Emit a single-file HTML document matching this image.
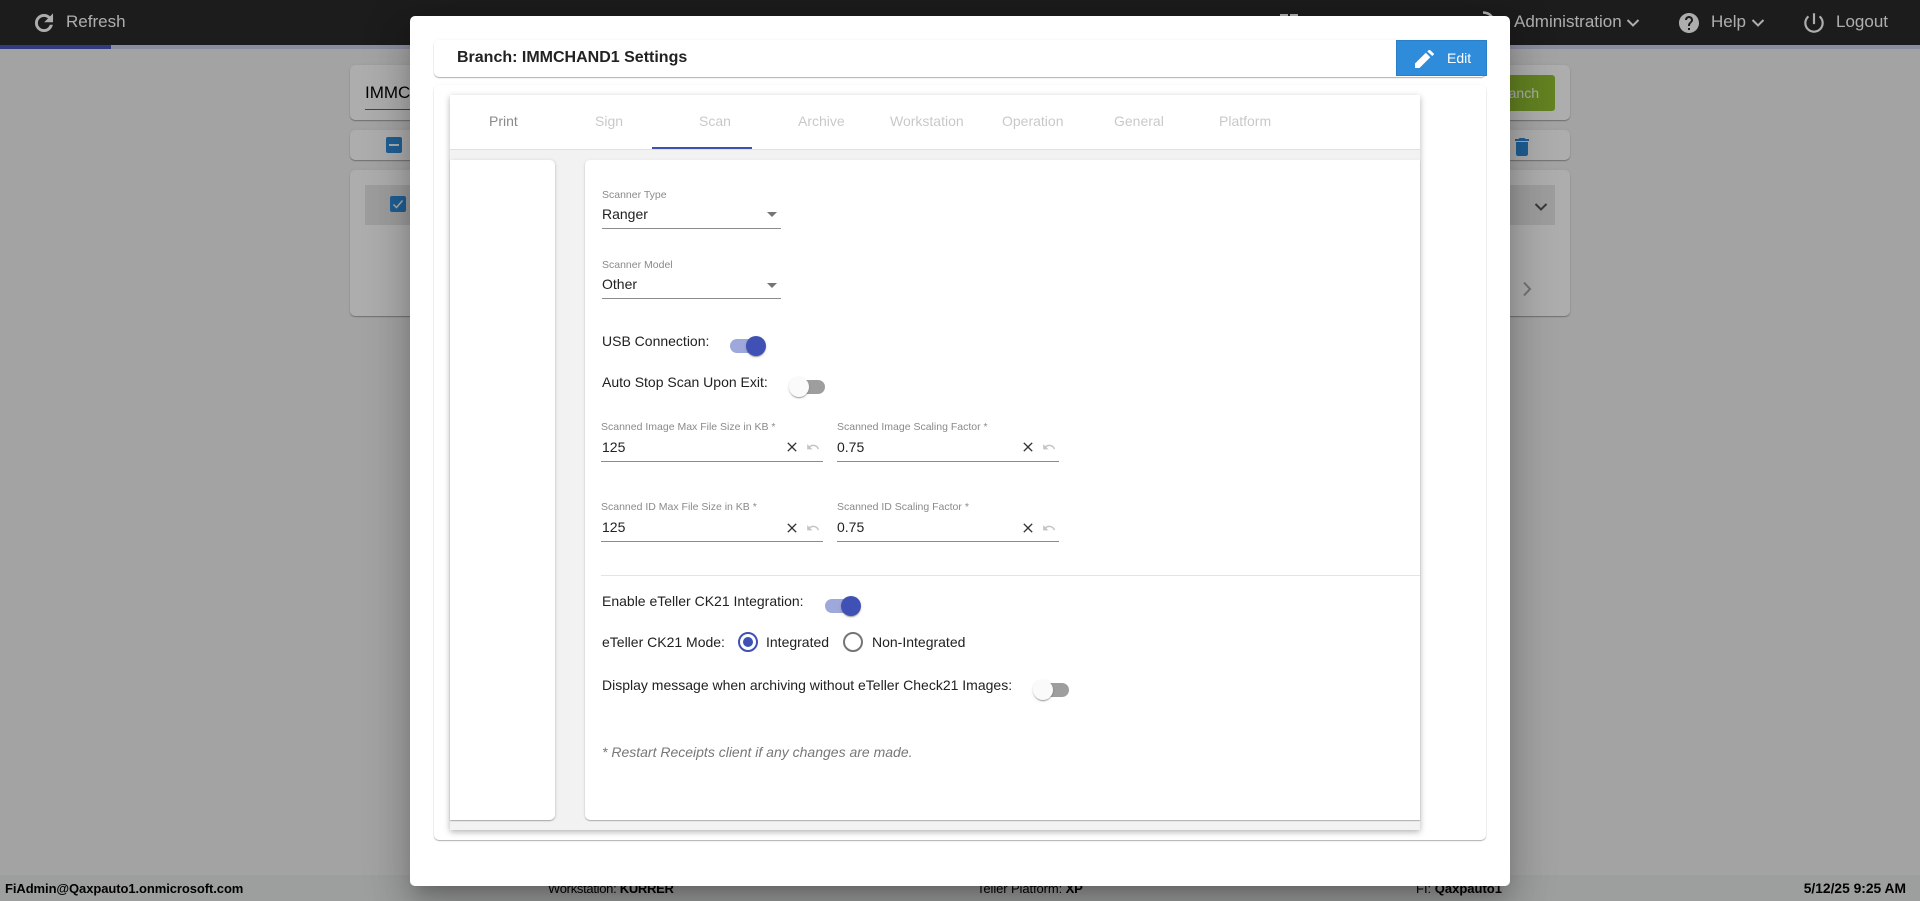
<!DOCTYPE html>
<html lang="en"><head><meta charset="utf-8"><title>Branch Settings</title>
<style>
*{box-sizing:border-box}
html,body{margin:0;padding:0;width:1920px;height:901px;overflow:hidden;background:#f0f0f0;font-family:"Liberation Sans",Arial,sans-serif;color:#212121}
.a{position:absolute}
.t{position:absolute;white-space:nowrap;line-height:20px;height:20px;font-size:14px}
.card{position:absolute;background:#fff;border-radius:5px;box-shadow:0 1px 1px rgba(0,0,0,.3),0 0 3px rgba(0,0,0,.05)}
svg{position:absolute;display:block}
.nav{color:#fff;font-size:17px}
.tab{color:rgba(0,0,0,.22)}
.lbl{font-size:10.5px;color:#8a8a8a}
.line{position:absolute;height:1px;background:#8c8c8c}
.arrow{position:absolute;width:0;height:0;border-left:5px solid transparent;border-right:5px solid transparent;border-top:5px solid #757575}
.trk{position:absolute;width:34px;height:14px;border-radius:7px}
.thm{position:absolute;width:20px;height:20px;border-radius:50%;box-shadow:0 2px 1px -1px rgba(0,0,0,.2),0 1px 1px 0 rgba(0,0,0,.14),0 1px 3px 0 rgba(0,0,0,.12)}
.foot{font-size:13px;color:#000}
</style></head><body>
<!-- background page -->
<div class="a" style="left:0;top:0;width:1920px;height:45px;background:#2a2a2a"></div>
<div class="a" style="left:0;top:45px;width:1920px;height:4px;background:#ccd0ee"></div>
<div class="a" style="left:0;top:45px;width:111px;height:4px;background:#4a58c0"></div>
<svg style="left:31px;top:10px" width="26" height="26" viewBox="0 0 24 24" fill="#fff" stroke="#fff" stroke-width=".7"><path d="M17.65 6.35C16.2 4.9 14.21 4 12 4c-4.42 0-7.99 3.58-7.99 8s3.57 8 7.99 8c3.73 0 6.84-2.55 7.73-6h-2.08c-.82 2.33-3.04 4-5.65 4-3.31 0-6-2.69-6-6s2.69-6 6-6c1.66 0 3.14.69 4.22 1.78L13 11h7V4l-2.35 2.35z"/></svg>
<div class="t nav" style="left:66px;top:12px">Refresh</div>
<div class="a" style="left:1280px;top:14px;width:8px;height:2px;background:#fff"></div>
<div class="a" style="left:1290px;top:14px;width:8px;height:2px;background:#fff"></div>
<svg style="left:1481px;top:11px" width="14" height="6" viewBox="0 0 14 6" fill="none" stroke="#fff" stroke-width="2.500"><path d="M2 1.500c4 0 7 1.500 9 4.500"/></svg>
<div class="t nav" style="left:1514px;top:12px">Administration</div>
<svg style="left:1626px;top:18px" width="14" height="10" viewBox="0 0 14 10" fill="none" stroke="#fff" stroke-width="2"><path d="M1.500 2l5.500 5.500L12.500 2"/></svg>
<svg style="left:1677px;top:11px" width="24" height="24" viewBox="0 0 24 24" fill="#fff"><path d="M12 2C6.48 2 2 6.48 2 12s4.48 10 10 10 10-4.48 10-10S17.52 2 12 2zm1 17h-2v-2h2v2zm2.07-7.75l-.9.92C13.45 12.9 13 13.5 13 15h-2v-.5c0-1.1.45-2.1 1.17-2.83l1.24-1.26c.37-.36.59-.86.59-1.41 0-1.1-.9-2-2-2s-2 .9-2 2H8c0-2.21 1.79-4 4-4s4 1.79 4 4c0 .88-.36 1.68-.93 2.25z"/></svg>
<div class="t nav" style="left:1711px;top:12px">Help</div>
<svg style="left:1751px;top:18px" width="14" height="10" viewBox="0 0 14 10" fill="none" stroke="#fff" stroke-width="2"><path d="M1.500 2l5.500 5.500L12.500 2"/></svg>
<svg style="left:1801px;top:10px" width="26" height="26" viewBox="0 0 24 24" fill="#fff"><path d="M13 3h-2v10h2V3zm4.830 2.170l-1.420 1.420C17.990 7.860 19 9.810 19 12c0 3.870-3.130 7-7 7s-7-3.130-7-7c0-2.190 1.010-4.140 2.580-5.420L6.170 5.170C4.230 6.820 3 9.260 3 12c0 4.970 4.030 9 9 9s9-4.030 9-9c0-2.740-1.230-5.180-3.170-6.830z"/></svg>
<div class="t nav" style="left:1836px;top:12px">Logout</div>

<div class="card" style="left:350px;top:65px;width:1220px;height:55px"></div>
<div class="t" style="left:365px;top:83px;font-size:17px;color:#000">IMMCHAND1</div>
<div class="line" style="left:365px;top:109px;width:100px;background:#666"></div>
<div class="a" style="left:1480px;top:75px;width:75px;height:36px;background:#93c032;border-radius:3px"></div>
<div class="t" style="left:1450px;top:83px;font-size:14px;color:#fff;width:89px;text-align:right">Branch</div>
<div class="card" style="left:350px;top:130px;width:1220px;height:30px"></div>
<div class="a" style="left:386px;top:137px;width:16px;height:16px;background:#2e8cdb;border-radius:2px"></div>
<div class="a" style="left:389px;top:144px;width:10px;height:2px;background:#fff"></div>
<svg style="left:1510px;top:135px" width="24" height="24" viewBox="0 0 24 24" fill="#2e8cdb"><path d="M6 19c0 1.100.9 2 2 2h8c1.100 0 2-.9 2-2V7H6v12zM19 4h-3.500l-1-1h-5l-1 1H5v2h14V4z"/></svg>
<div class="card" style="left:350px;top:170px;width:1220px;height:146px"></div>
<div class="a" style="left:365px;top:185px;width:1190px;height:40px;background:#e8e8e8"></div>
<div class="a" style="left:390px;top:196px;width:16px;height:16px;background:#2e8cdb;border-radius:2px"></div>
<svg style="left:390px;top:196px" width="16" height="16" viewBox="0 0 16 16" fill="none" stroke="#fff" stroke-width="1.500"><path d="M3.500 8.500l3 3 6-7"/></svg>
<svg style="left:1534px;top:202px" width="14" height="10" viewBox="0 0 14 10" fill="none" stroke="#555" stroke-width="2"><path d="M1.500 2l5.500 5.500L12.500 2"/></svg>
<svg style="left:1522px;top:281px" width="10" height="16" viewBox="0 0 10 16" fill="none" stroke="#aaa" stroke-width="2"><path d="M2 1.500l6 6.500-6 6.500"/></svg>

<div class="a" style="left:0;top:875px;width:1920px;height:26px;background:#e8eaeb"></div>
<div class="t foot" style="left:5px;top:879px;font-weight:bold;letter-spacing:-.08px">FiAdmin@Qaxpauto1.onmicrosoft.com</div>
<div class="t foot" style="left:548px;top:879px;letter-spacing:-.3px">Workstation: <b>KURRER</b></div>
<div class="t foot" style="left:977px;top:879px;letter-spacing:-.1px">Teller Platform: <b>XP</b></div>
<div class="t foot" style="left:1416px;top:879px">FI: <b>Qaxpauto1</b></div>
<div class="t foot" style="right:14px;top:879px;font-weight:bold;font-size:13.800px">5/12/25 9:25 AM</div>

<!-- overlay -->
<div class="a" style="left:0;top:0;width:1920px;height:901px;background:rgba(0,0,0,.32)"></div>

<!-- modal -->
<div class="a" style="left:410px;top:16px;width:1100px;height:870px;background:#fff;border-radius:5px;box-shadow:0 11px 15px -7px rgba(0,0,0,.2),0 24px 38px 3px rgba(0,0,0,.14),0 9px 46px 8px rgba(0,0,0,.12)"></div>
<div class="card" style="left:434px;top:40px;width:1052px;height:37px"></div>
<div class="t" style="left:457px;top:48px;font-size:16px;font-weight:bold;color:#222">Branch: IMMCHAND1 Settings</div>
<div class="a" style="left:1396px;top:40px;width:91px;height:36px;background:#2e8cdb;border:1px solid #2a7fc6"></div>
<svg style="left:1415px;top:50px" width="19" height="18" viewBox="0 0 19 18" fill="#fff"><path d="M0 18v-4.500L10.800 2.700l4.500 4.500L4.500 18zM12.300 1.500L13.800 0a.9.900 0 0 1 1.200 0l3.700 3.500a.9.900 0 0 1 0 1.200l-1.500 1.300z"/></svg>
<div class="t" style="left:1447px;top:48px;color:#fff">Edit</div>

<div class="card" style="left:434px;top:85px;width:1052px;height:755px"></div>
<div class="a" style="left:450px;top:95px;width:970px;height:735px;background:#f2f2f2;box-shadow:0 2px 6px rgba(0,0,0,.3)"></div>
<div class="a" style="left:450px;top:95px;width:970px;height:55px;background:#fff;border-bottom:1px solid #e0e0e0"></div>
<div class="t" style="left:489px;top:111px;color:#8a8a8a">Print</div>
<div class="t tab" style="left:595px;top:111px">Sign</div>
<div class="t tab" style="left:699px;top:111px">Scan</div>
<div class="t tab" style="left:798px;top:111px">Archive</div>
<div class="t tab" style="left:890px;top:111px">Workstation</div>
<div class="t tab" style="left:1002px;top:111px">Operation</div>
<div class="t tab" style="left:1114px;top:111px">General</div>
<div class="t tab" style="left:1219px;top:111px">Platform</div>
<div class="a" style="left:652px;top:147px;width:100px;height:2px;background:#3f51b5"></div>

<div class="card" style="left:450px;top:160px;width:105px;height:660px;border-radius:0 5px 5px 0;box-shadow:0 1px 1px rgba(0,0,0,.28),1px 0 3px rgba(0,0,0,.1)"></div>
<div class="card" style="left:585px;top:160px;width:835px;height:660px;border-radius:5px 0 0 5px;box-shadow:0 1px 1px rgba(0,0,0,.28),-1px 0 3px rgba(0,0,0,.05)"></div>

<div class="t lbl" style="left:602px;top:185px">Scanner Type</div>
<div class="t" style="left:602px;top:204px">Ranger</div>
<div class="arrow" style="left:767px;top:212px"></div>
<div class="line" style="left:602px;top:228px;width:179px"></div>
<div class="t lbl" style="left:602px;top:255px">Scanner Model</div>
<div class="t" style="left:602px;top:274px">Other</div>
<div class="arrow" style="left:767px;top:283px"></div>
<div class="line" style="left:602px;top:298px;width:179px"></div>

<div class="t" style="left:602px;top:331px">USB Connection:</div>
<div class="trk" style="left:730px;top:339px;background:#9fa8da"></div>
<div class="thm" style="left:746px;top:336px;background:#3f51b5"></div>
<div class="t" style="left:602px;top:372px">Auto Stop Scan Upon Exit:</div>
<div class="trk" style="left:791px;top:380px;background:#9e9e9e"></div>
<div class="thm" style="left:789px;top:377px;background:#fafafa"></div>

<div class="t lbl" style="left:601px;top:417px">Scanned Image Max File Size in KB *</div>
<div class="t" style="left:602px;top:437px">125</div>
<div class="line" style="left:601px;top:461px;width:222px"></div>
<div class="t lbl" style="left:837px;top:417px">Scanned Image Scaling Factor *</div>
<div class="t" style="left:837px;top:437px">0.75</div>
<div class="line" style="left:837px;top:461px;width:222px"></div>
<div class="t lbl" style="left:601px;top:497px">Scanned ID Max File Size in KB *</div>
<div class="t" style="left:602px;top:517px">125</div>
<div class="line" style="left:601px;top:541px;width:222px"></div>
<div class="t lbl" style="left:837px;top:497px">Scanned ID Scaling Factor *</div>
<div class="t" style="left:837px;top:517px">0.75</div>
<div class="line" style="left:837px;top:541px;width:222px"></div>

<svg style="left:784px;top:439px" width="16" height="16" viewBox="0 0 24 24" fill="#333"><path d="M19 6.410L17.590 5 12 10.590 6.410 5 5 6.410 10.590 12 5 17.590 6.410 19 12 13.410 17.590 19 19 17.590 13.410 12z"/></svg>
<svg style="left:1020px;top:439px" width="16" height="16" viewBox="0 0 24 24" fill="#333"><path d="M19 6.410L17.590 5 12 10.590 6.410 5 5 6.410 10.590 12 5 17.590 6.410 19 12 13.410 17.590 19 19 17.590 13.410 12z"/></svg>
<svg style="left:784px;top:520px" width="16" height="16" viewBox="0 0 24 24" fill="#333"><path d="M19 6.410L17.590 5 12 10.590 6.410 5 5 6.410 10.590 12 5 17.590 6.410 19 12 13.410 17.590 19 19 17.590 13.410 12z"/></svg>
<svg style="left:1020px;top:520px" width="16" height="16" viewBox="0 0 24 24" fill="#333"><path d="M19 6.410L17.590 5 12 10.590 6.410 5 5 6.410 10.590 12 5 17.590 6.410 19 12 13.410 17.590 19 19 17.590 13.410 12z"/></svg>
<svg style="left:806px;top:440px" width="14" height="14" viewBox="0 0 24 24" fill="#c4c4c4"><path d="M12.500 8c-2.650 0-5.050.99-6.900 2.600L2 7v9h9l-3.620-3.620c1.390-1.160 3.160-1.880 5.120-1.880 3.540 0 6.550 2.310 7.600 5.500l2.370-.78C21.080 11.030 17.150 8 12.500 8z"/></svg>
<svg style="left:1042px;top:440px" width="14" height="14" viewBox="0 0 24 24" fill="#c4c4c4"><path d="M12.500 8c-2.650 0-5.050.99-6.900 2.600L2 7v9h9l-3.620-3.620c1.390-1.160 3.160-1.880 5.120-1.880 3.540 0 6.550 2.310 7.600 5.500l2.370-.78C21.080 11.030 17.150 8 12.500 8z"/></svg>
<svg style="left:806px;top:521px" width="14" height="14" viewBox="0 0 24 24" fill="#c4c4c4"><path d="M12.500 8c-2.650 0-5.050.99-6.900 2.600L2 7v9h9l-3.620-3.620c1.390-1.160 3.160-1.880 5.120-1.880 3.540 0 6.550 2.310 7.600 5.500l2.370-.78C21.080 11.030 17.150 8 12.500 8z"/></svg>
<svg style="left:1042px;top:521px" width="14" height="14" viewBox="0 0 24 24" fill="#c4c4c4"><path d="M12.500 8c-2.650 0-5.050.99-6.900 2.600L2 7v9h9l-3.620-3.620c1.390-1.160 3.160-1.880 5.120-1.880 3.540 0 6.550 2.310 7.600 5.500l2.370-.78C21.080 11.030 17.150 8 12.500 8z"/></svg>

<div class="a" style="left:601px;top:575px;width:819px;height:1px;background:#e4e4e4"></div>
<div class="t" style="left:602px;top:591px">Enable eTeller CK21 Integration:</div>
<div class="trk" style="left:825px;top:599px;background:#9fa8da"></div>
<div class="thm" style="left:841px;top:596px;background:#3f51b5"></div>
<div class="t" style="left:602px;top:632px">eTeller CK21 Mode:</div>
<svg style="left:738px;top:632px" width="20" height="20" viewBox="0 0 20 20"><circle cx="10" cy="10" r="9" fill="none" stroke="#3f51b5" stroke-width="2"/><circle cx="10" cy="10" r="5" fill="#3f51b5"/></svg>
<div class="t" style="left:766px;top:632px">Integrated</div>
<svg style="left:843px;top:632px" width="20" height="20" viewBox="0 0 20 20"><circle cx="10" cy="10" r="9" fill="none" stroke="#757575" stroke-width="2"/></svg>
<div class="t" style="left:872px;top:632px">Non-Integrated</div>
<div class="t" style="left:602px;top:675px">Display message when archiving without eTeller Check21 Images:</div>
<div class="trk" style="left:1035px;top:683px;background:#9e9e9e"></div>
<div class="thm" style="left:1033px;top:680px;background:#fafafa"></div>
<div class="t" style="left:602px;top:742px;font-style:italic;color:#777">* Restart Receipts client if any changes are made.</div>
</body></html>
